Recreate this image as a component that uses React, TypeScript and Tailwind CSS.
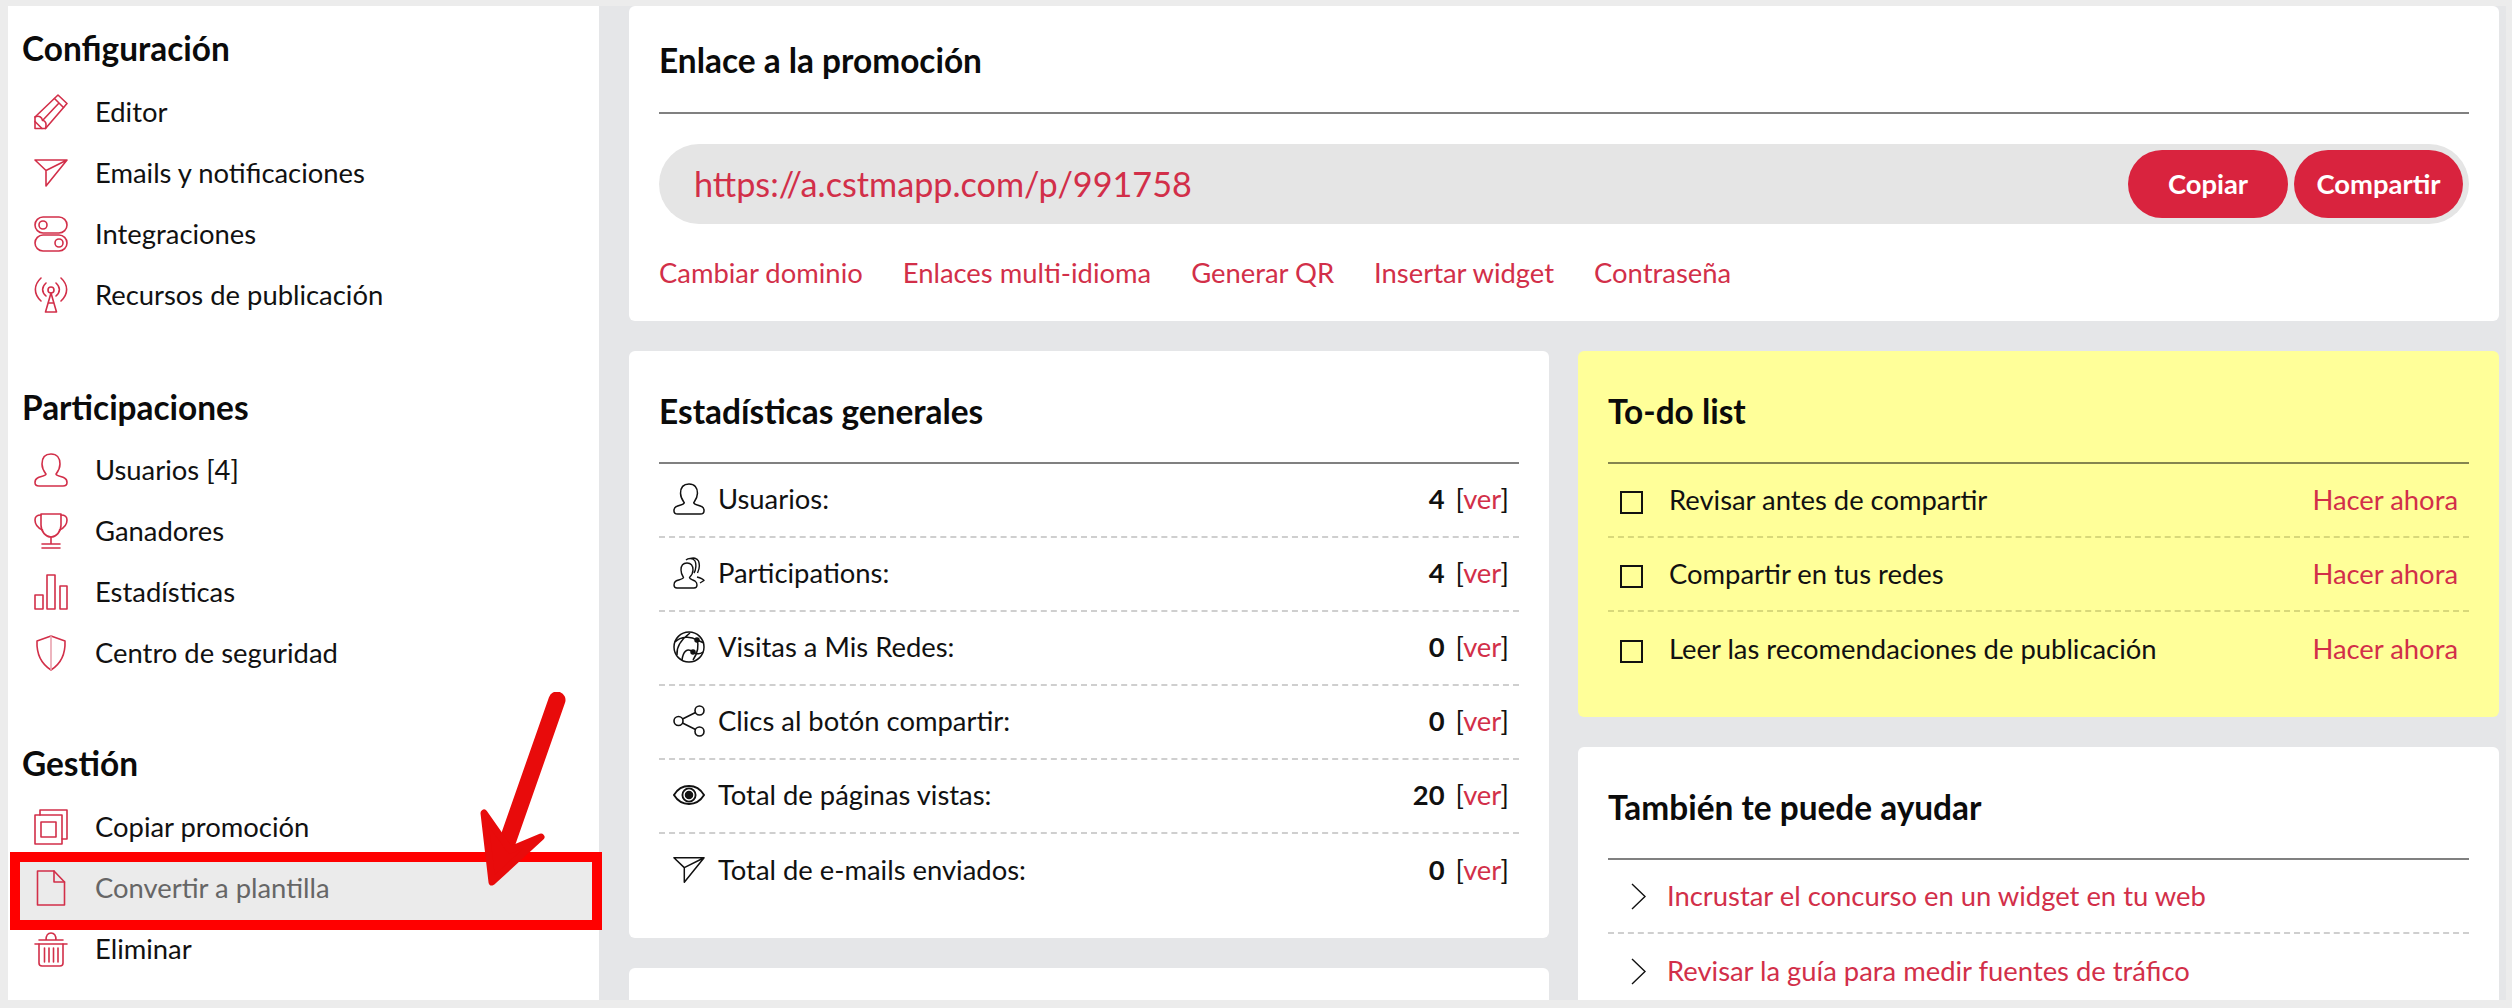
const Red = "#d22f49";

function Icon({ children, w = 34, h = 36, color = Red, sw = 1.6 }: { children: React.ReactNode; w?: number; h?: number; color?: string; sw?: number }) {
  return (
    <svg width={w} height={h} viewBox={`0 0 ${w} ${h}`} fill="none" stroke={color} strokeWidth={sw} strokeLinejoin="round" strokeLinecap="round">
      {children}
    </svg>
  );
}

const PencilIcon = () => (
  <Icon>
    <path d="M1 34.5V23L24 1L33 9.5L11.5 34.5H1Z" />
    <path d="M20.5 4.5L29.5 13.5M1 23C5 21 8 23 8.5 26.5C11 26.5 13 29 11.5 34.5M8.5 26.5L25 9M1 27.5L8 34.5" />
  </Icon>
);
const SendIcon = ({ color = Red, w = 34 }: { color?: string; w?: number }) => (
  <svg width={w} height={28} viewBox="0 0 34 28" fill="none" stroke={color} strokeWidth={1.6} strokeLinejoin="round">
    <path d="M1 1H33L12 27V11.5L1 1ZM12 11.5L33 1" />
  </svg>
);
const ToggleIcon = () => (
  <Icon>
    <rect x="1" y="1" width="32" height="16" rx="8" />
    <circle cx="9" cy="9" r="4" />
    <rect x="1" y="19" width="32" height="16" rx="8" />
    <circle cx="25" cy="27" r="4" />
  </Icon>
);
const AntennaIcon = () => (
  <Icon>
    <path d="M7 1C-0.5 8 -0.5 17 7 24M27 1C34.5 8 34.5 17 27 24M12 6C7.5 10 7.5 15 12 19M22 6C26.5 10 26.5 15 22 19" />
    <circle cx="17" cy="13" r="3" />
    <path d="M17 16L11.5 35H22.5L17 16ZM14 26H20" />
  </Icon>
);
const UserIcon = ({ color = Red, w = 34, h = 34 }: { color?: string; w?: number; h?: number }) => (
  <svg width={w} height={h} viewBox="0 0 34 34" fill="none" stroke={color} strokeWidth={1.6} strokeLinejoin="round">
    <path d="M17 1C11 1 8 5 8 11C8 16 10.5 19 12 21C12 23 6 23.5 3.5 25C1.5 26 1 28 1 29.5C1 32 2.5 33 5 33H29C31.5 33 33 32 33 29.5C33 28 32.5 26 30.5 25C28 23.5 22 23 22 21C23.5 19 26 16 26 11C26 5 23 1 17 1Z" />
  </svg>
);
const TrophyIcon = () => (
  <Icon>
    <path d="M7 1H27V12C27 19 22 24 17 24C12 24 7 19 7 12V1Z" />
    <path d="M7 2C3 2 1 4 1 7C1 11 4 15 8.5 17M27 2C31 2 33 4 33 7C33 11 30 15 25.5 17" />
    <path d="M17 24V31M8 31H26M8 35H26" />
  </Icon>
);
const BarsIcon = () => (
  <Icon>
    <rect x="1" y="21" width="8" height="14" />
    <rect x="13" y="1" width="8" height="34" />
    <rect x="26" y="12" width="7" height="23" />
  </Icon>
);
const ShieldIcon = () => (
  <Icon>
    <path d="M17 1L31 6C31.5 18 28 28 17 35C6 28 2.5 18 3 6L17 1Z" />
    <path d="M17 1V35" stroke="#e9a2ae" />
  </Icon>
);
const CopyIcon = () => (
  <Icon>
    <path d="M6 6V1H33V30H28" />
    <rect x="1" y="6" width="27" height="29" />
    <rect x="7" y="13" width="15" height="15" />
  </Icon>
);
const DocIcon = () => (
  <Icon>
    <path d="M3.5 1H20L30.5 12V35H3.5V1Z" />
    <path d="M20 1V12H30.5" />
  </Icon>
);
const TrashIcon = () => (
  <Icon>
    <path d="M1 13H33M5 9H29M12 9C12 4 14 2 17 2C20 2 22 4 22 9" />
    <path d="M5 13V32C5 34 6 35 8 35H26C28 35 29 34 29 32V13" />
    <path d="M10.5 17V31M15 17V31M19.5 17V31M24 17V31" />
  </Icon>
);

const Black = "#111111";

const UsersStack = () => (
  <svg width="32" height="32" viewBox="0 0 32 32" fill="none" stroke={Black} strokeWidth={1.4} strokeLinejoin="round">
    <path d="M14 6C10 6 8 9 8 13C8 17 9.5 19 10.5 20.5C10.5 22 5 23 3 24C1 25 1 26.5 1 28C1 30 2.5 31 4 31H21C23 31 24 30 24 28C24 26 23.5 25 22 24C20 23 16.5 22 16.5 20.5C18 19 20 17 20 13C20 9 18 6 14 6Z" />
    <path d="M13 3C15 1 20 0.5 22 4C23.5 7 23 13 21 16M18 1.5C20 0.5 24 1 25.5 4C27 8 26 13 24.5 16M24 20C26 20.5 30 22 31 23.5L27 26" />
  </svg>
);
const GlobeIcon = () => (
  <svg width="32" height="32" viewBox="0 0 32 32" fill="none" stroke={Black} strokeWidth={1.5}>
    <circle cx="16" cy="16" r="15" />
    <path d="M2 11C8 5 18 5 24 9C26 14 25 22 20 29M4 24C3 15 9 8 17 2M9 29C10 21 14 16 20 21C23 23 26 24 30 21M24 9L31 12" />
    <circle cx="24" cy="9" r="2" fill={Black} />
    <circle cx="20" cy="21" r="2" fill={Black} />
  </svg>
);
const ShareIcon = () => (
  <svg width="32" height="32" viewBox="0 0 32 32" fill="none" stroke={Black} strokeWidth={1.6}>
    <circle cx="5.5" cy="16" r="4.5" />
    <circle cx="26.5" cy="5.5" r="4.5" />
    <circle cx="26.5" cy="26.5" r="4.5" />
    <path d="M9.5 14L22.5 7.5M9.5 18L22.5 24.5" />
  </svg>
);
const EyeIcon = () => (
  <svg width="34" height="22" viewBox="0 0 34 22" fill="none" stroke={Black} strokeWidth={2}>
    <path d="M1 11C5 4.5 11 1.5 17 1.5C23 1.5 29 4.5 33 11C29 17.5 23 20.5 17 20.5C11 20.5 5 17.5 1 11Z" />
    <circle cx="17" cy="11" r="7" />
    <circle cx="17" cy="11" r="4.5" fill={Black} stroke="none" />
  </svg>
);

const Chevron = () => (
  <svg width="15" height="27" viewBox="0 0 15 27" fill="none" stroke={Black} strokeWidth={1.4}>
    <path d="M1 1L14 13.5L1 26" />
  </svg>
);

function SideItem({ icon, label, gray }: { icon: React.ReactNode; label: string; gray?: boolean }) {
  return (
    <div className={`relative flex h-[61px] items-center pl-[26px] ${gray ? "text-[#666666]" : "text-[#111111]"}`}>
      <div className="flex w-[34px] shrink-0 items-center justify-center">{icon}</div>
      <span className="ml-[27px] text-[27.4px]">{label}</span>
    </div>
  );
}

function SideHeading({ children, className }: { children: React.ReactNode; className: string }) {
  return <h3 className={`flex h-[48px] items-center pl-[14px] text-[33.4px] font-bold text-[#0b0b0b] ${className}`}>{children}</h3>;
}

function Sidebar() {
  return (
    <aside className="relative w-[591px] shrink-0 bg-white">
      <SideHeading className="mt-[18px] mb-[9px]">Configuración</SideHeading>
      <SideItem icon={<PencilIcon />} label="Editor" />
      <SideItem icon={<SendIcon />} label="Emails y notificaciones" />
      <SideItem icon={<ToggleIcon />} label="Integraciones" />
      <SideItem icon={<AntennaIcon />} label="Recursos de publicación" />

      <SideHeading className="mt-[58px] mb-[8px]">Participaciones</SideHeading>
      <SideItem icon={<UserIcon />} label="Usuarios [4]" />
      <SideItem icon={<TrophyIcon />} label="Ganadores" />
      <SideItem icon={<BarsIcon />} label="Estadísticas" />
      <SideItem icon={<ShieldIcon />} label="Centro de seguridad" />

      <SideHeading className="mt-[56px] mb-[9px]">Gestión</SideHeading>
      <SideItem icon={<CopyIcon />} label="Copiar promoción" />
      <div className="relative">
        {/* red annotation box from the screenshot */}
        <div className="absolute -top-[5px] -right-[3px] -bottom-[12px] left-[2px] border-[10px] border-[#ff0000] bg-[#ebebeb]" />
        <SideItem icon={<DocIcon />} label="Convertir a plantilla" gray />
      </div>
      <SideItem icon={<TrashIcon />} label="Eliminar" />

      <svg className="absolute top-[686px] left-[462px]" width="100" height="200" viewBox="0 0 100 200" fill="#e80b0b" stroke="#e80b0b" strokeLinejoin="round" strokeLinecap="round">
        <path d="M87 8L32 165" strokeWidth="17" fill="none" />
        <path d="M14 121L22 190L71 145L40 158L14 121Z" strokeWidth="7" />
      </svg>
    </aside>
  );
}

function Card({ title, className = "bg-white", rule = "border-[#808080]", children }: { title: string; className?: string; rule?: string; children?: React.ReactNode }) {
  return (
    <section className={`overflow-hidden rounded-[6px] px-[30px] ${className}`}>
      <h3 className={`flex h-[113px] items-center border-b-2 pt-[9px] text-[33.4px] font-bold text-[#0b0b0b] ${rule}`}>{title}</h3>
      {children}
    </section>
  );
}

const stats = [
  { icon: <UserIcon color={Black} w={32} h={32} />, label: "Usuarios:", value: "4" },
  { icon: <UsersStack />, label: "Participations:", value: "4" },
  { icon: <GlobeIcon />, label: "Visitas a Mis Redes:", value: "0" },
  { icon: <ShareIcon />, label: "Clics al botón compartir:", value: "0" },
  { icon: <EyeIcon />, label: "Total de páginas vistas:", value: "20" },
  { icon: <SendIcon color={Black} w={32} />, label: "Total de e-mails enviados:", value: "0" },
];

const todos = ["Revisar antes de compartir", "Compartir en tus redes", "Leer las recomendaciones de publicación"];
const links = ["Cambiar dominio", "Enlaces multi-idioma", "Generar QR", "Insertar widget", "Contraseña"];

export default function App() {
  return (
    <div className="h-[1008px] w-[2512px] overflow-hidden bg-[#ececec] pt-[6px] pr-[6px] pb-[8px] pl-[8px]" style={{ fontFamily: '"Lato", "Noto Sans", sans-serif' }}>
      <div className="flex h-[994px] bg-[#e5e6e8]">
        <Sidebar />
        <main className="flex-1 overflow-hidden pr-[7px] pl-[30px]">
          <section className="h-[315px] rounded-[6px] bg-white px-[30px]">
            <h3 className="flex h-[108px] items-center border-b-2 border-[#808080] pt-[2px] text-[33.4px] font-bold text-[#0b0b0b]">Enlace a la promoción</h3>
            <div className="mt-[30px] flex h-[80px] items-center justify-between rounded-full bg-[#e5e5e5] pr-[6px] pl-[35px]">
              <span className="text-[34.2px] text-[#d22f49]">https://a.cstmapp.com/p/991758</span>
              <div className="flex gap-[6px]">
                <button className="h-[68px] w-[160px] rounded-full bg-[#d9233e] text-[27.4px] font-bold text-white">Copiar</button>
                <button className="h-[68px] w-[169px] rounded-full bg-[#d9233e] text-[27.4px] font-bold text-white">Compartir</button>
              </div>
            </div>
            <div className="mt-[28px] flex gap-[40px] text-[27.4px] text-[#d22f49]">
              {links.map((l) => (
                <span key={l}>{l}</span>
              ))}
            </div>
          </section>

          <div className="mt-[30px] grid grid-cols-[920px_921px] gap-x-[29px]">
            <div className="flex flex-col gap-[30px]">
              <Card title="Estadísticas generales" className="h-[587px] bg-white">
                {stats.map((s, i) => (
                  <div key={s.label} className={`flex h-[74px] items-center pr-[10px] pb-[2px] pl-[14px] text-[27.4px] text-[#111111] ${i < stats.length - 1 ? "border-b-2 border-dashed border-[#cfcfcf]" : ""}`}>
                    <div className="flex w-[32px] items-center justify-center">{s.icon}</div>
                    <span className="ml-[13px] flex-1">{s.label}</span>
                    <b className="font-bold">{s.value}</b>
                    <span className="ml-[11px]">
                      [<span className="text-[#d22f49]">ver</span>]
                    </span>
                  </div>
                ))}
              </Card>
              <div className="h-[60px] rounded-[6px] bg-white" />
            </div>

            <div className="flex flex-col gap-[30px]">
              <Card title="To-do list" className="h-[366px] bg-[#ffff99]" rule="border-[#85854f]">
                {todos.map((t, i) => (
                  <div key={t} className={`flex h-[74px] items-center pr-[11px] pl-[12px] text-[27.4px] text-[#111111] ${i < todos.length - 1 ? "border-b-2 border-dashed border-[#d8d87a]" : ""}`}>
                    <span className="mt-[4px] h-[23px] w-[23px] border-2 border-[#111111]" />
                    <span className="ml-[26px] flex-1">{t}</span>
                    <span className="text-[#d22f49]">Hacer ahora</span>
                  </div>
                ))}
              </Card>
              <Card title="También te puede ayudar" className="h-[300px] bg-white">
                {["Incrustar el concurso en un widget en tu web", "Revisar la guía para medir fuentes de tráfico"].map((t, i) => (
                  <div key={t} className={`flex h-[74px] items-center pl-[23px] text-[27.4px] text-[#d22f49] ${i === 0 ? "border-b-2 border-dashed border-[#cfcfcf]" : ""}`}>
                    <Chevron />
                    <span className="ml-[21px]">{t}</span>
                  </div>
                ))}
              </Card>
            </div>
          </div>
        </main>
      </div>
    </div>
  );
}
